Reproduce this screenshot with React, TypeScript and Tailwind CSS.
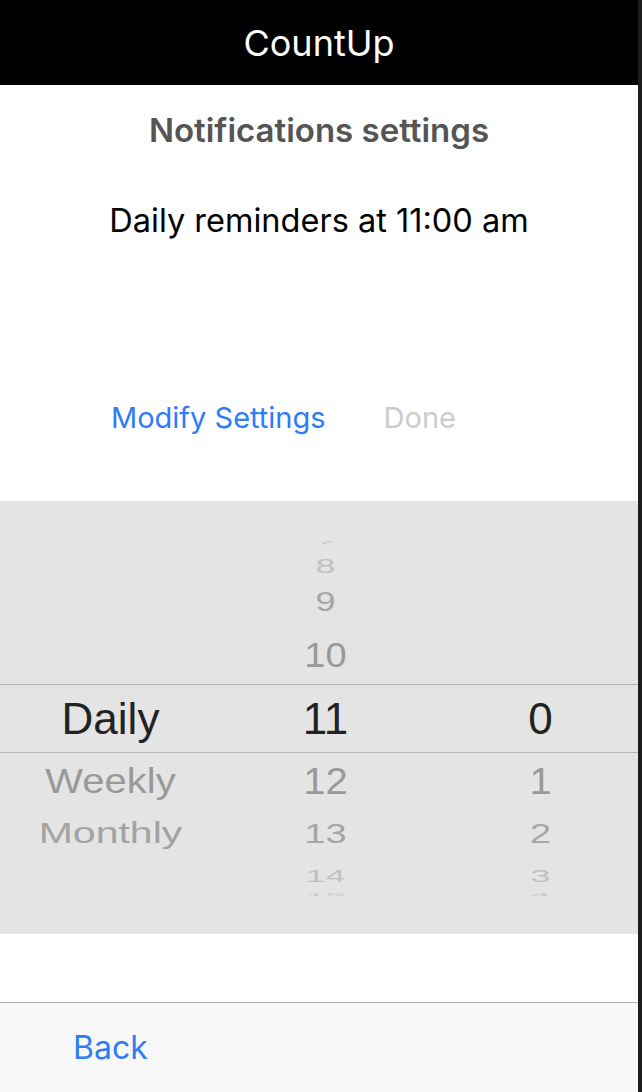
import React from "react";

const SF = "font-['Inter','Roboto','Liberation_Sans',sans-serif]";

type Cell = { text: string; cls: string } | null;

type Row = { h: string; cells: [Cell, Cell, Cell] };

const rows: Row[] = [
  { h: "h-[47px]", cells: [null, { text: "7", cls: "text-[36px] scale-y-[0.08] text-[#c8c8c8] translate-y-[18px]" }, null] },
  { h: "h-[30px]", cells: [null, { text: "8", cls: "text-[35px] scale-y-[0.6] text-[#c0c0c0]" }, null] },
  { h: "h-[48px]", cells: [null, { text: "9", cls: "text-[36px] scale-y-[0.76] text-[#a6a6a6]" }, null] },
  { h: "h-[58px]", cells: [null, { text: "10", cls: "text-[38px] scale-y-[0.93] text-[#999999]" }, null] },
  {
    h: "h-[69px] border-y border-[#b4b4b4]",
    cells: [
      { text: "Daily", cls: "text-[44px] text-[#222222]" },
      { text: "11", cls: "text-[44px] text-[#222222]" },
      { text: "0", cls: "text-[44px] text-[#222222]" },
    ],
  },
  {
    h: "h-[55px]",
    cells: [
      { text: "Weekly", cls: "text-[40px] scale-y-[0.88] text-[#999999]" },
      { text: "12", cls: "text-[40px] scale-y-[0.9] text-[#999999]" },
      { text: "1", cls: "text-[40px] scale-y-[0.9] text-[#999999]" },
    ],
  },
  {
    h: "h-[51px]",
    cells: [
      { text: "Monthly", cls: "text-[41px] scale-y-[0.72] text-[#a3a3a3]" },
      { text: "13", cls: "text-[38px] scale-y-[0.72] text-[#a6a6a6]" },
      { text: "2", cls: "text-[38px] scale-y-[0.72] text-[#a6a6a6]" },
    ],
  },
  {
    h: "h-[22px]",
    cells: [
      null,
      { text: "14", cls: "text-[36px] scale-y-[0.45] text-[#c0c0c0]" },
      { text: "3", cls: "text-[36px] scale-y-[0.45] text-[#c0c0c0]" },
    ],
  },
  {
    h: "h-[12px]",
    cells: [
      null,
      { text: "15", cls: "text-[36px] scale-y-[0.12] text-[#c8c8c8] -translate-y-[4px]" },
      { text: "4", cls: "text-[36px] scale-y-[0.12] text-[#c8c8c8] -translate-y-[4px]" },
    ],
  },
];

export default function App() {
  return (
    <div className="flex w-[642px] h-[1092px] overflow-hidden bg-white">
      <div className="flex flex-col w-[638px] h-full">
        <div className={`h-[85px] bg-black flex items-center justify-center text-white text-[36px] ${SF} font-normal`}>
          CountUp
        </div>
        <div className={`h-[92px] flex items-end justify-center pb-[22px] text-[33px] font-semibold text-[#555555] ${SF}`}>
          Notifications settings
        </div>
        <div className={`h-[88px] flex items-center justify-center text-[32.5px] text-black ${SF}`}>
          Daily reminders at 11:00 am
        </div>
        <div className={`h-[236px] flex items-center pl-[111px] gap-[58px] text-[29px] ${SF}`}>
          <span className="text-[#2f7cf6] pt-[70px]">Modify Settings</span>
          <span className="text-[#cccccc] pt-[70px]">Done</span>
        </div>
        <div className="h-[433px] bg-[#e4e4e4] flex flex-col overflow-hidden font-['Liberation_Sans',Arial,sans-serif]">
          {rows.map((r, i) => (
            <div key={i} className={`${r.h} shrink-0 grid grid-cols-[215px_215px_215px] pl-[3px]`}>
              {r.cells.map((c, j) => (
                <div key={j} className="h-full flex items-center justify-center leading-none">
                  {c ? <span className={`inline-block ${c.cls}`}>{c.text}</span> : null}
                </div>
              ))}
            </div>
          ))}
        </div>
        <div className="h-[69px] bg-white border-b border-[#b2b2b2]" />
        <div className={`flex-1 bg-[#f8f8f8] flex items-center pl-[73px] text-[32px] text-[#2f7cf6] ${SF}`}>
          Back
        </div>
      </div>
      <div className="w-[4px] h-full bg-[#1c1c1c]" />
    </div>
  );
}
